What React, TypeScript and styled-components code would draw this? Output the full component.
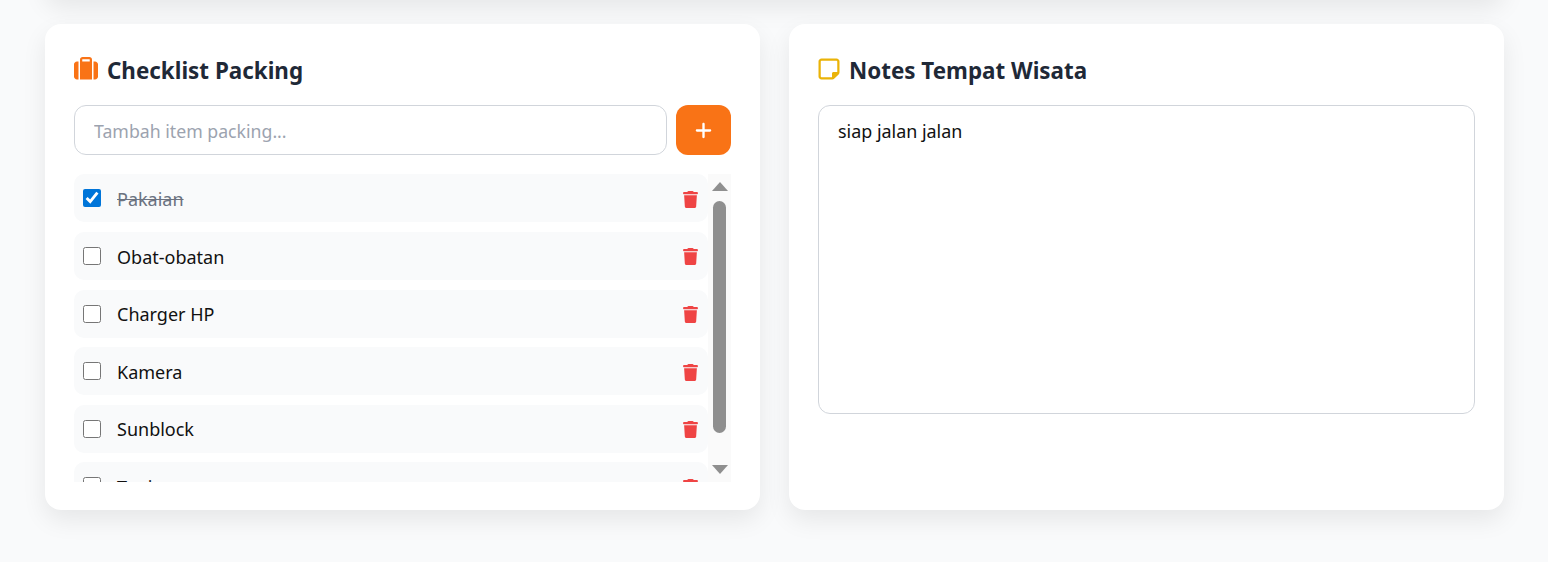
import React, { useState } from 'react';
import { createGlobalStyle, styled } from 'styled-components';
import { FaPlus, FaRegNoteSticky, FaSuitcase, FaTrash } from 'react-icons/fa6';

const GlobalStyle = createGlobalStyle`
    html, body {
        margin: 0;
        height: 562px;
        overflow: hidden;
        background: #f9fafb;
        font-family: "Noto Sans", "Open Sans", sans-serif;
    }
`;

const Page = styled.div`
    padding: 0 44px 0 45px;
`;

const PrevCard = styled.div`
    height: 40px;
    margin-top: -42px;
    margin-bottom: 26px;
    background: #fff;
    border-radius: 16px;
    box-shadow: 0 10px 25px rgba(0, 0, 0, 0.08);
`;

const Columns = styled.div`
    display: grid;
    grid-template-columns: 715px 715px;
    gap: 29px;
`;

const Card = styled.section`
    height: 486px;
    box-sizing: border-box;
    padding: 29px;
    background: #fff;
    border-radius: 16px;
    box-shadow: 0 10px 25px rgba(0, 0, 0, 0.08);
    overflow: hidden;
`;

const Title = styled.h2<{ $gap?: number; $iconShift?: number }>`
    display: flex;
    align-items: center;
    gap: ${p => p.$gap || 9}px;
    height: 34px;
    margin: 0 0 18px;
    font-size: 22.4px;
    font-weight: 700;
    line-height: 33px;
    color: #1f2937;

    svg {
        flex-shrink: 0;
        font-size: 24px;
        margin-bottom: 3px;
        margin-left: ${p => p.$iconShift || 0}px;
    }
`;

const InputRow = styled.div`
    display: flex;
    gap: 9px;
    margin-bottom: 19.4px;
`;

const TextInput = styled.input`
    flex: 1;
    min-width: 0;
    height: 50px;
    box-sizing: border-box;
    padding: 2px 19px 0;
    border: 1px solid #d1d5db;
    border-radius: 12px;
    outline: none;
    font: inherit;
    font-size: 17.7px;

    &::placeholder {
        color: #9ca3af;
    }
`;

const AddButton = styled.button`
    display: flex;
    align-items: center;
    justify-content: center;
    width: 55px;
    height: 50px;
    padding: 0;
    border: none;
    border-radius: 12px;
    background: #f97316;
    color: #fff;
    font-size: 19px;
`;

const ListWrap = styled.div`
    display: flex;
    height: 307.6px;
    overflow: hidden;
`;

const List = styled.ul`
    flex: 1;
    min-width: 0;
    margin: 0;
    padding: 0;
    list-style: none;
`;

const Row = styled.li`
    display: flex;
    align-items: center;
    height: 48px;
    box-sizing: border-box;
    margin-bottom: 9.6px;
    padding: 0 9px;
    background: #f9fafb;
    border-radius: 10px;
`;

const Check = styled.input`
    width: 18px;
    height: 18px;
    margin: 0 16px 0 0;
    accent-color: #0075d9;
`;

const Label = styled.span<{ $done: boolean }>`
    flex: 1;
    padding-top: 1.4px;
    font-size: 18px;
    color: ${p => (p.$done ? '#6b7280' : '#111')};
    text-decoration: ${p => (p.$done ? 'line-through' : 'none')};
`;

const DeleteButton = styled.button`
    display: flex;
    padding: 2px 0 0;
    border: none;
    background: none;
    color: #ef4444;
    font-size: 17px;
`;

const Scrollbar = styled.div`
    display: flex;
    flex-direction: column;
    align-items: center;
    width: 23px;
    background: #fafafa;
`;

const Arrow = styled.div<{ $down?: boolean }>`
    width: 0;
    height: 0;
    margin: ${p => (p.$down ? '0' : '8px 0 10px')};
    border-left: 8px solid transparent;
    border-right: 8px solid transparent;
    border-bottom: ${p => (p.$down ? '0' : '9px solid #8f8f8f')};
    border-top: ${p => (p.$down ? '9px solid #8f8f8f' : '0')};
`;

const Thumb = styled.div`
    width: 13px;
    height: 232px;
    margin-bottom: 32px;
    border-radius: 7px;
    background: #8f8f8f;
`;

const NotesArea = styled.textarea`
    display: block;
    width: 100%;
    height: 309px;
    box-sizing: border-box;
    padding: 13px 19px;
    border: 1px solid #d1d5db;
    border-radius: 12px;
    outline: none;
    resize: none;
    font: inherit;
    font-size: 17.9px;
    color: #111;
`;

const initialItems = [
    { name: 'Pakaian', done: true },
    { name: 'Obat-obatan', done: false },
    { name: 'Charger HP', done: false },
    { name: 'Kamera', done: false },
    { name: 'Sunblock', done: false },
    { name: 'Topi', done: false },
];

const App: React.FC = () => {
    const [items, setItems] = useState(initialItems);

    const toggle = (name: string) => {
        setItems(prev => prev.map(i => (i.name === name ? { ...i, done: !i.done } : i)));
    };

    return (
        <React.Fragment>
            <GlobalStyle />
            <Page>
                <PrevCard />
                <Columns>
                    <Card>
                        <Title>
                            <FaSuitcase color="#f97316" />
                            Checklist Packing
                        </Title>
                        <InputRow>
                            <TextInput placeholder="Tambah item packing..." />
                            <AddButton>
                                <FaPlus />
                            </AddButton>
                        </InputRow>
                        <ListWrap>
                            <List>
                                {items.map(item => (
                                    <Row key={item.name}>
                                        <Check
                                            type="checkbox"
                                            checked={item.done}
                                            onChange={() => toggle(item.name)}
                                        />
                                        <Label $done={item.done}>{item.name}</Label>
                                        <DeleteButton>
                                            <FaTrash />
                                        </DeleteButton>
                                    </Row>
                                ))}
                            </List>
                            <Scrollbar>
                                <Arrow />
                                <Thumb />
                                <Arrow $down />
                            </Scrollbar>
                        </ListWrap>
                    </Card>
                    <Card>
                        <Title $gap={8.5} $iconShift={-1.5}>
                            <FaRegNoteSticky color="#eab308" />
                            Notes Tempat Wisata
                        </Title>
                        <NotesArea defaultValue="siap jalan jalan" />
                    </Card>
                </Columns>
            </Page>
        </React.Fragment>
    );
};

export default App;
